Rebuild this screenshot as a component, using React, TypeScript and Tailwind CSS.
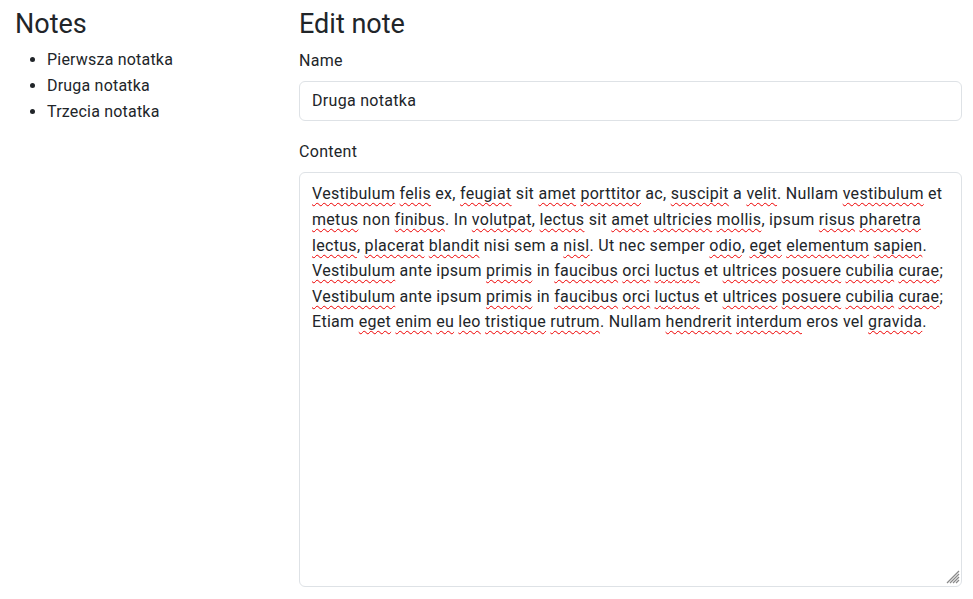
import React from "react";

const misspelled = new Set([
  "Vestibulum","felis","feugiat","amet","porttitor","suscipit","velit","vestibulum",
  "metus","finibus","volutpat","lectus","ultricies","mollis","risus","pharetra",
  "placerat","blandit","nisl","odio","eget","elementum","sapien","primis","faucibus",
  "orci","luctus","ultrices","posuere","cubilia","curae","enim","eu","leo","tristique",
  "rutrum","hendrerit","interdum","gravida",
]);

const lines = [
  "Vestibulum felis ex, feugiat sit amet porttitor ac, suscipit a velit. Nullam vestibulum et",
  "metus non finibus. In volutpat, lectus sit amet ultricies mollis, ipsum risus pharetra",
  "lectus, placerat blandit nisi sem a nisl. Ut nec semper odio, eget elementum sapien.",
  "Vestibulum ante ipsum primis in faucibus orci luctus et ultrices posuere cubilia curae;",
  "Vestibulum ante ipsum primis in faucibus orci luctus et ultrices posuere cubilia curae;",
  "Etiam eget enim eu leo tristique rutrum. Nullam hendrerit interdum eros vel gravida.",
];

function Line({ text }: { text: string }) {
  const parts = text.split(/([A-Za-z]+)/);
  return (
    <div className="whitespace-pre">
      {parts.map((p, i) =>
        misspelled.has(p) ? (
          <span
            key={i}
            className="underline decoration-wavy decoration-[#ee0000] decoration-1 underline-offset-[3px] [text-decoration-skip-ink:none]"
          >
            {p}
          </span>
        ) : (
          <span key={i}>{p}</span>
        )
      )}
    </div>
  );
}

export default function App() {
  return (
    <div className="flex bg-white pl-[15px] pr-[11px] text-[#212529] font-['Roboto','Liberation_Sans',sans-serif] tracking-[0.3px] min-h-[599px]">
      <div className="w-[284px] shrink-0">
        <h3 className="mt-[8px] mb-[7px] text-[27px] leading-[1.2] font-normal tracking-normal">Notes</h3>
        <ul className="list-disc pl-8 text-base leading-[26px] tracking-[0.2px]">
          <li>Pierwsza notatka</li>
          <li>Druga notatka</li>
          <li>Trzecia notatka</li>
        </ul>
      </div>
      <div className="flex-1 min-w-0">
        <h3 className="mt-[8px] mb-[9px] text-[27px] leading-[1.2] font-normal tracking-normal">Edit note</h3>
        <div className="mb-2 text-base leading-6">Name</div>
        <div className="flex h-[40px] items-center rounded-[6px] border border-[#dee2e6] px-3 text-base">
          Druga notatka
        </div>
        <div className="mt-[19px] mb-2 text-base leading-6">Content</div>
        <div className="relative h-[415px] rounded-[6px] border border-[#dee2e6] px-3 pt-[8px] text-base leading-[25.6px]">
          {lines.map((l, i) => (
            <Line key={i} text={l} />
          ))}
          <svg
            className="absolute bottom-[2px] right-[1px]"
            width="16"
            height="16"
            viewBox="0 0 16 16"
          >
            <line x1="15" y1="3" x2="3" y2="15" stroke="#8a8a8a" strokeWidth="1.2" />
            <line x1="15" y1="6" x2="6" y2="15" stroke="#8a8a8a" strokeWidth="1.2" />
            <line x1="15" y1="9" x2="9" y2="15" stroke="#8a8a8a" strokeWidth="1.2" />
            <line x1="15" y1="12" x2="12" y2="15" stroke="#8a8a8a" strokeWidth="1.2" />
          </svg>
        </div>
      </div>
    </div>
  );
}
